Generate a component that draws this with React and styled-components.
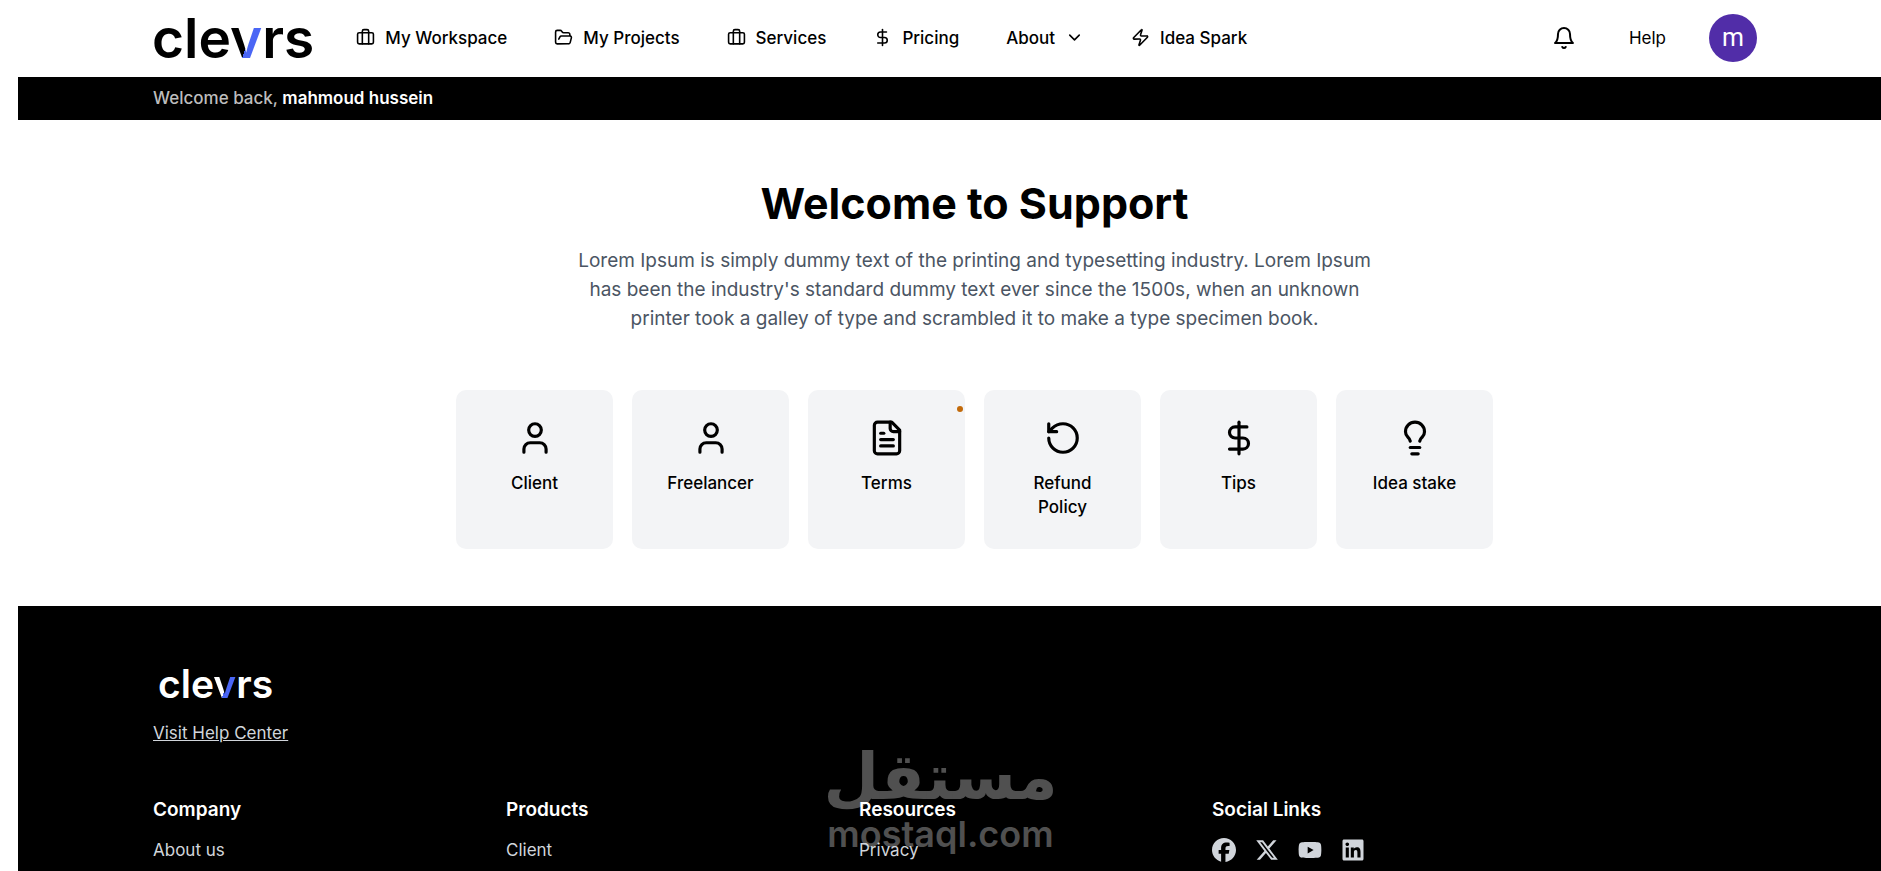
import React from "react";
import styled, { createGlobalStyle } from "styled-components";
import {
  Briefcase,
  ChevronDown,
  DollarSign,
  FolderOpen,
  Lightbulb,
  RotateCcw,
  User,
  Zap,
} from "lucide-react";
import { FaFacebook, FaLinkedin, FaXTwitter, FaYoutube } from "react-icons/fa6";

const navItems = [
  { label: "My Workspace", icon: Briefcase },
  { label: "My Projects", icon: FolderOpen },
  { label: "Services", icon: Briefcase },
  { label: "Pricing", icon: DollarSign },
  { label: "About", menu: true },
  { label: "Idea Spark", icon: Zap },
];

const DocIcon = () => (
  <StrokeIcon viewBox="0 0 24 24" $size={38}>
    <path d="M15 2H6a2 2 0 0 0-2 2v16a2 2 0 0 0 2 2h12a2 2 0 0 0 2-2V7Z" />
    <path d="M14 2v4a2 2 0 0 0 2 2h4" />
    <path d="M10 9H8" />
    <path d="M16 13H8" />
    <path d="M16 17H8" />
  </StrokeIcon>
);

const BellIcon = () => (
  <StrokeIcon viewBox="0 0 24 24" $size={24}>
    <path d="M6 8a6 6 0 0 1 12 0c0 7 3 9 3 9H3s3-2 3-9" />
    <path d="M10.3 21a1.94 1.94 0 0 0 3.4 0" />
  </StrokeIcon>
);

const topics = [
  { label: "Client", icon: User },
  { label: "Freelancer", icon: User },
  { label: "Terms", icon: DocIcon, dot: true },
  { label: "Refund Policy", icon: RotateCcw },
  { label: "Tips", icon: DollarSign },
  { label: "Idea stake", icon: Lightbulb },
];

const footerColumns = [
  { title: "Company", link: "About us" },
  { title: "Products", link: "Client" },
  { title: "Resources", link: "Privacy" },
];

const socials = [
  { label: "Facebook", icon: FaFacebook },
  { label: "X", icon: FaXTwitter },
  { label: "YouTube", icon: FaYoutube },
  { label: "LinkedIn", icon: FaLinkedin },
];

const Logo = ({ size, color }) => (
  <LogoLink href="#" $size={size} $color={color}>
    cle<LogoV $color={color}>v</LogoV>rs
  </LogoLink>
);

const App = () => {
  return (
    <>
      <GlobalStyle />
      <Page>
        <Header>
          <Logo size={55} color="#000" />
          <Nav>
            {navItems.map(({ label, icon: Icon, menu }) =>
              menu ? (
                <NavButton key={label} type="button">
                  {label}
                  <ChevronDown size={19} />
                </NavButton>
              ) : (
                <NavLink key={label} href="#">
                  <Icon size={19} />
                  {label}
                </NavLink>
              )
            )}
          </Nav>
          <Account>
            <IconButton type="button" aria-label="Notifications">
              <BellIcon />
            </IconButton>
            <HelpLink href="#">Help</HelpLink>
            <Avatar type="button">m</Avatar>
          </Account>
        </Header>
        <WelcomeBar>
          Welcome back, <b>mahmoud hussein</b>
        </WelcomeBar>

        <Main>
          <Title>Welcome to Support</Title>
          <Intro>
            Lorem Ipsum is simply dummy text of the printing and typesetting
            industry. Lorem Ipsum has been the industry's standard dummy text
            ever since the 1500s, when an unknown printer took a galley of type
            and scrambled it to make a type specimen book.
          </Intro>
          <Topics>
            {topics.map(({ label, icon: Icon, dot }) => (
              <TopicCard key={label} href="#">
                <Icon size={38} />
                <span>{label}</span>
                {dot && <Dot />}
              </TopicCard>
            ))}
          </Topics>
        </Main>

        <Footer>
          <FooterBrand>
            <Logo size={39} color="#fff" />
          </FooterBrand>
          <HelpCenter href="#">Visit Help Center</HelpCenter>
          <FooterGrid>
            {footerColumns.map(({ title, link }) => (
              <div key={title}>
                <FooterTitle>{title}</FooterTitle>
                <FooterLink href="#">{link}</FooterLink>
              </div>
            ))}
            <div>
              <FooterTitle>Social Links</FooterTitle>
              <Socials>
                {socials.map(({ label, icon: Icon }) => (
                  <a key={label} href="#" aria-label={label}>
                    <Icon size={24} />
                  </a>
                ))}
              </Socials>
            </div>
          </FooterGrid>
          <Watermark>
            <WatermarkArabic lang="ar" dir="rtl">
              مستقل
            </WatermarkArabic>
            <WatermarkLatin>mostaql.com</WatermarkLatin>
          </Watermark>
        </Footer>
      </Page>
    </>
  );
};

const GlobalStyle = createGlobalStyle`
  * {
    box-sizing: border-box;
  }

  body {
    margin: 0;
    background: #fff;
    color: #000;
    font-family: Inter, "Liberation Sans", sans-serif;
    font-size: 17px;
    line-height: 24px;
    overflow: hidden;
  }

  a {
    color: inherit;
    text-decoration: none;
  }

  button {
    padding: 0;
    border: 0;
    background: none;
    color: inherit;
    font: inherit;
    cursor: pointer;
  }
`;

const Page = styled.div`
  height: 100vh;
  padding-left: 18px;
  display: flex;
  flex-direction: column;
`;

const StrokeIcon = styled.svg`
  width: ${({ $size }) => $size}px;
  height: ${({ $size }) => $size}px;
  fill: none;
  stroke: currentColor;
  stroke-width: 2;
  stroke-linecap: round;
  stroke-linejoin: round;
`;

const Header = styled.header`
  height: 77px;
  padding: 0 124px 2px 134px;
  display: flex;
  align-items: center;
`;

const LogoLink = styled.a`
  padding-top: 2px;
  color: ${({ $color }) => $color};
  font-size: ${({ $size }) => $size}px;
  line-height: 1;
  font-weight: 600;
`;

const LogoV = styled.span`
  background: linear-gradient(
    110deg,
    ${({ $color }) => $color} 56%,
    #4a66f5 56%
  );
  background-clip: text;
  color: transparent;
`;

const Nav = styled.nav`
  margin-left: 42px;
  display: flex;
  gap: 47px;
  font-weight: 500;
`;

const NavLink = styled.a`
  display: flex;
  align-items: center;
  gap: 10px;
  white-space: nowrap;
`;

const NavButton = styled.button`
  display: flex;
  align-items: center;
  gap: 10px;
`;

const Account = styled.div`
  margin-left: auto;
  display: flex;
  align-items: center;
`;

const IconButton = styled.button`
  display: flex;
`;

const HelpLink = styled.a`
  margin: 0 43px 0 53px;
`;

const Avatar = styled.button`
  width: 48px;
  height: 48px;
  border-radius: 50%;
  background: #512da8;
  color: #fff;
  font-family: Roboto, sans-serif;
  font-size: 25px;
`;

const WelcomeBar = styled.div`
  height: 43px;
  padding: 9px 135px;
  background: #000;
  color: #bdbdbd;
  font-weight: 500;

  b {
    color: #fff;
    font-weight: 600;
  }
`;

const Main = styled.main`
  padding: 57px 0 57px 50px;
  display: flex;
  flex-direction: column;
  align-items: center;
`;

const Title = styled.h1`
  margin: 0;
  font-size: 43px;
  line-height: 52px;
  font-weight: 700;
`;

const Intro = styled.p`
  max-width: 820px;
  margin: 17px 0 57px;
  color: #4b5563;
  font-size: 19px;
  line-height: 29px;
  text-align: center;
`;

const Topics = styled.div`
  display: grid;
  grid-template-columns: repeat(6, 157px);
  gap: 19px;
`;

const TopicCard = styled.a`
  position: relative;
  padding: 29px 29px 30px;
  display: flex;
  flex-direction: column;
  align-items: center;
  gap: 14px;
  border-radius: 10px;
  background: #f3f4f6;
  font-weight: 500;
  text-align: center;
`;

const Dot = styled.i`
  position: absolute;
  top: 16px;
  right: 2px;
  width: 6px;
  height: 6px;
  border-radius: 50%;
  background: #c26a0a;
`;

const Footer = styled.footer`
  position: relative;
  flex: 1;
  padding: 56px 135px 0;
  background: #000;
  color: #d1d5db;
`;

const FooterBrand = styled.div`
  padding-left: 5px;
  display: flex;
`;

const HelpCenter = styled.a`
  display: inline-block;
  margin-top: 18px;
  text-decoration: underline;
`;

const FooterGrid = styled.div`
  position: relative;
  z-index: 1;
  margin-top: 53px;
  display: grid;
  grid-template-columns: repeat(4, 353px);
`;

const FooterTitle = styled.h3`
  margin: 0 0 16px;
  color: #fff;
  font-size: 19px;
  line-height: 24px;
  font-weight: 600;
`;

const FooterLink = styled.a`
  display: block;
`;

const Socials = styled.div`
  display: flex;
  gap: 19px;

  a {
    display: flex;
  }
`;

/* spans the whole window, left gutter included, so it stays centred */
const Watermark = styled.div`
  position: absolute;
  top: 135px;
  left: -18px;
  right: 0;
  display: flex;
  flex-direction: column;
  align-items: center;
  gap: 5px;
  color: #505050;
  pointer-events: none;
`;

const WatermarkArabic = styled.span`
  font-family: "DejaVu Sans", sans-serif;
  font-size: 64px;
  line-height: 72px;
  font-weight: 700;
`;

const WatermarkLatin = styled.span`
  font-size: 36px;
  line-height: 32px;
  font-weight: 600;
`;

export default App;
